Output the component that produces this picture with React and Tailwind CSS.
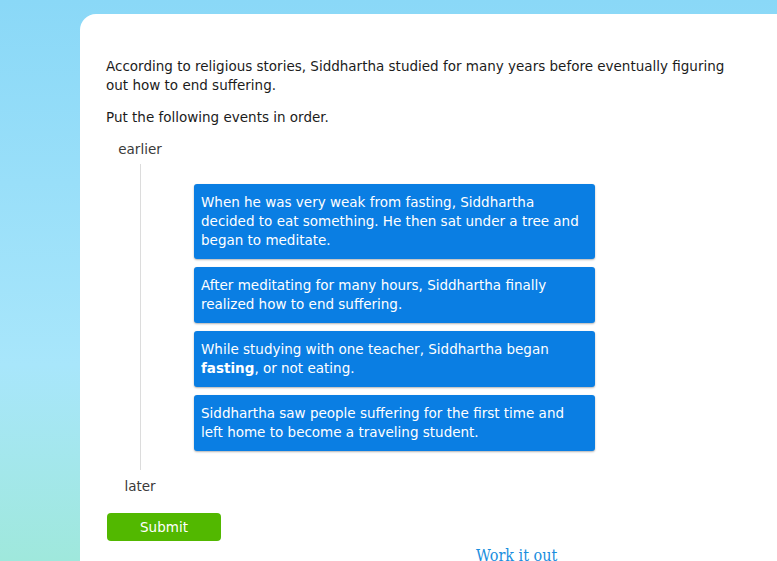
const EVENTS = [
  <>When he was very weak from fasting, Siddhartha decided to eat something. He then sat under a tree and began to meditate.</>,
  <>After meditating for many hours, Siddhartha finally realized how to end suffering.</>,
  <>While studying with one teacher, Siddhartha began <b>fasting</b>, or not eating.</>,
  <>Siddhartha saw people suffering for the first time and left home to become a traveling student.</>,
];

export default function App() {
  return (
    <div className="h-[561px] w-[777px] overflow-hidden bg-[linear-gradient(180deg,#8ad8f7_0%,#a8e6fb_65%,#9fe8dc_100%)] pt-[14px] pl-[80px] font-['DejaVu_Sans',Verdana,sans-serif]">
      <div className="h-[600px] rounded-tl-[16px] bg-white pl-[26px] pt-[43px] text-[13.5px] text-[#1c1c1c]">
        <p className="w-[640px] leading-[19px]">
          According to religious stories, Siddhartha studied for many years before eventually figuring out how to end suffering.
        </p>
        <p className="mt-[13px] leading-[19px]">Put the following events in order.</p>

        <div className="mt-[13px] w-[68px] text-center leading-[19px] text-[#3a3a3a]">earlier</div>

        <div className="ml-[34px] mt-[5px] flex">
          <div className="h-[306px] w-px bg-[#dcdcdc]" />
          <div className="ml-[53px] mt-[20px] flex w-[401px] flex-col gap-[8px]">
            {EVENTS.map((e, i) => (
              <div
                key={i}
                className="rounded-[3px] bg-[#0a7ee3] px-[7px] py-[9px] leading-[19px] text-white shadow-[0_1px_2px_rgba(0,0,0,0.3)]"
              >
                {e}
              </div>
            ))}
          </div>
        </div>

        <div className="mt-[7px] w-[68px] text-center leading-[19px] text-[#3a3a3a]">later</div>

        <button className="ml-px mt-[17px] h-[28px] w-[114px] rounded-[4px] bg-[#52b800] text-[13.5px] text-white">
          Submit
        </button>

        <div className="ml-[370px] mt-[4px] font-['DejaVu_Serif',serif] font-stretch-condensed text-[16px] leading-[22px] text-[#1a8ede]">
          Work it out
        </div>
      </div>
    </div>
  );
}
